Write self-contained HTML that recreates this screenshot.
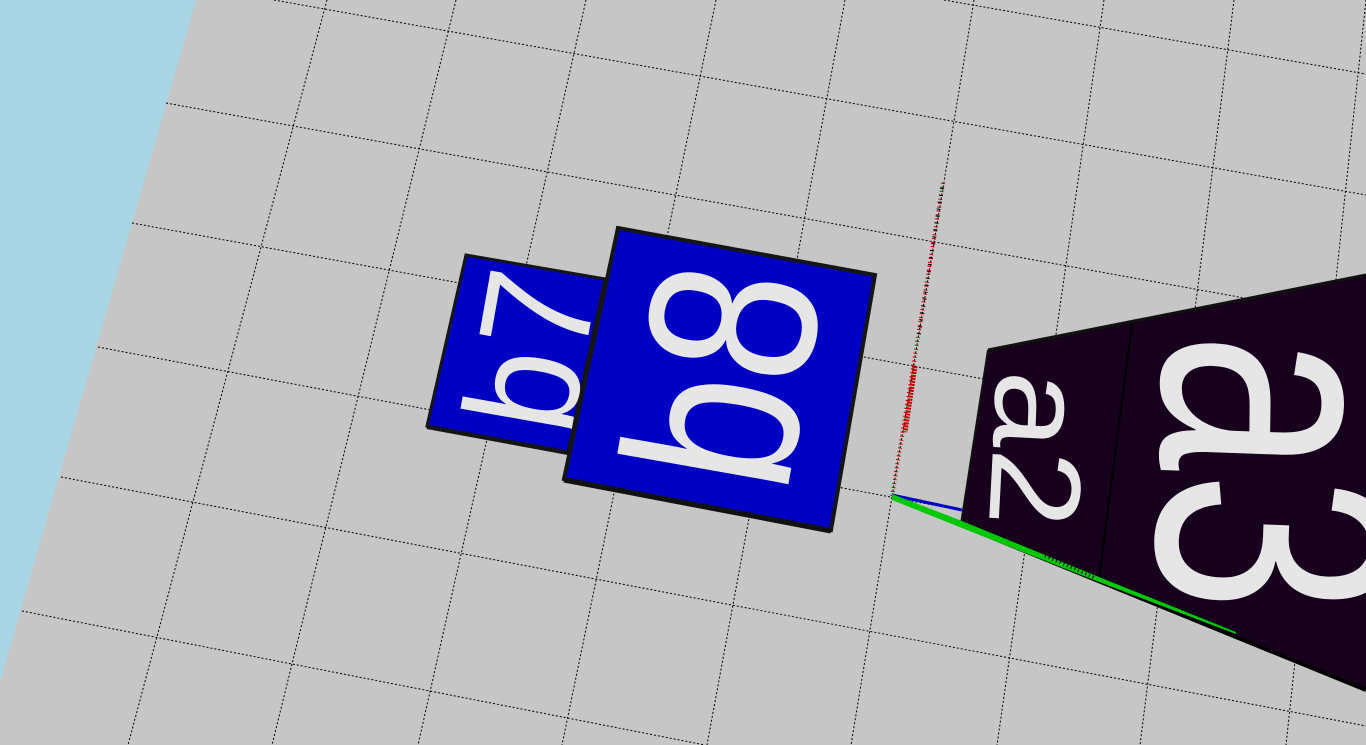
<!DOCTYPE html>
<html><head><meta charset="utf-8"><style>
html,body{margin:0;padding:0;width:1366px;height:745px;overflow:hidden;background:#c6c6c6}
svg{display:block}
text{font-family:"Liberation Sans",sans-serif;fill:#e6e6e6}
</style></head><body>
<svg width="1366" height="745" viewBox="0 0 1366 745" xmlns="http://www.w3.org/2000/svg">
<rect width="1366" height="745" fill="#c6c6c6"/>
<polygon points="0,0 196,0 0,682" fill="#a9d6e5"/>
<g stroke="#000" stroke-width="1" stroke-dasharray="2,2" fill="none">
<line x1="944" y1="0" x2="1366" y2="74"/>
<line x1="274" y1="0" x2="1366" y2="195"/>
<line x1="166" y1="103" x2="1366" y2="320"/>
<line x1="132" y1="223" x2="1366" y2="449"/>
<line x1="98" y1="347" x2="1366" y2="587"/>
<line x1="61" y1="477" x2="1366" y2="726"/>
<line x1="22" y1="611" x2="705" y2="745"/>
<line x1="327" y1="0" x2="128" y2="745"/>
<line x1="456" y1="0" x2="272" y2="745"/>
<line x1="586" y1="0" x2="418" y2="745"/>
<line x1="716" y1="0" x2="562" y2="745"/>
<line x1="845" y1="0" x2="707" y2="745"/>
<line x1="974" y1="0" x2="851" y2="745"/>
<line x1="1104" y1="0" x2="997" y2="745"/>
<line x1="1234" y1="0" x2="1140" y2="745"/>
<line x1="1366" y1="0" x2="1286" y2="745"/>
</g>
<!-- b7 tile -->
<polygon points="466,255 605,279 568,452 427,426" fill="#0000c4" stroke="#151515" stroke-width="3"/>
<line x1="427" y1="427" x2="568" y2="453" stroke="#151515" stroke-width="4"/>
<text transform="translate(584,360) rotate(-80) scale(1,1.1)" font-size="142" text-anchor="middle">b7</text>
<!-- b8 tile -->
<polygon points="618,228 875,275 831,530 564,479" fill="#0000c4" stroke="#151515" stroke-width="4"/>
<line x1="564" y1="480" x2="831" y2="531" stroke="#111" stroke-width="5"/>
<text transform="translate(805,390) rotate(-80) scale(1,1.23)" font-size="195" text-anchor="middle">b8</text>
<!-- red axis -->
<line x1="943" y1="183" x2="892" y2="497" stroke="#c00000" stroke-width="4" stroke-dasharray="1,3"/>
<line x1="942" y1="188" x2="918" y2="340" stroke="#000" stroke-width="4" stroke-dasharray="1,6"/>
<line x1="915" y1="366" x2="905" y2="432" stroke="#c00000" stroke-width="5" stroke-dasharray="2,1"/>
<!-- dark box -->
<polygon points="988,350 1366,275 1366,689 961,524" fill="#17001c"/>
<polyline points="988,350 1366,275" stroke="#111" stroke-width="3" fill="none"/>
<line x1="988" y1="350" x2="961" y2="524" stroke="#111" stroke-width="2"/>
<line x1="1132" y1="323" x2="1099" y2="580" stroke="#000" stroke-width="2"/>
<line x1="961" y1="525" x2="1366" y2="690" stroke="#000" stroke-width="4"/>
<text transform="translate(993,447) rotate(93) scale(1,0.92)" font-size="140" text-anchor="middle">a2</text>
<text transform="translate(1160,470) rotate(92) scale(1,1.35)" font-size="250" text-anchor="middle">a3</text>
<!-- axes -->
<line x1="892" y1="495" x2="962" y2="510" stroke="#0000c8" stroke-width="3"/>
<polygon points="892,494 962,521 1099,577 1236,632 1236,634 1099,582 962,528 892,500" fill="#00c800"/>
<line x1="1045" y1="556" x2="1095" y2="578" stroke="#000" stroke-width="3" stroke-dasharray="1,3"/>
</svg>
</body></html>
